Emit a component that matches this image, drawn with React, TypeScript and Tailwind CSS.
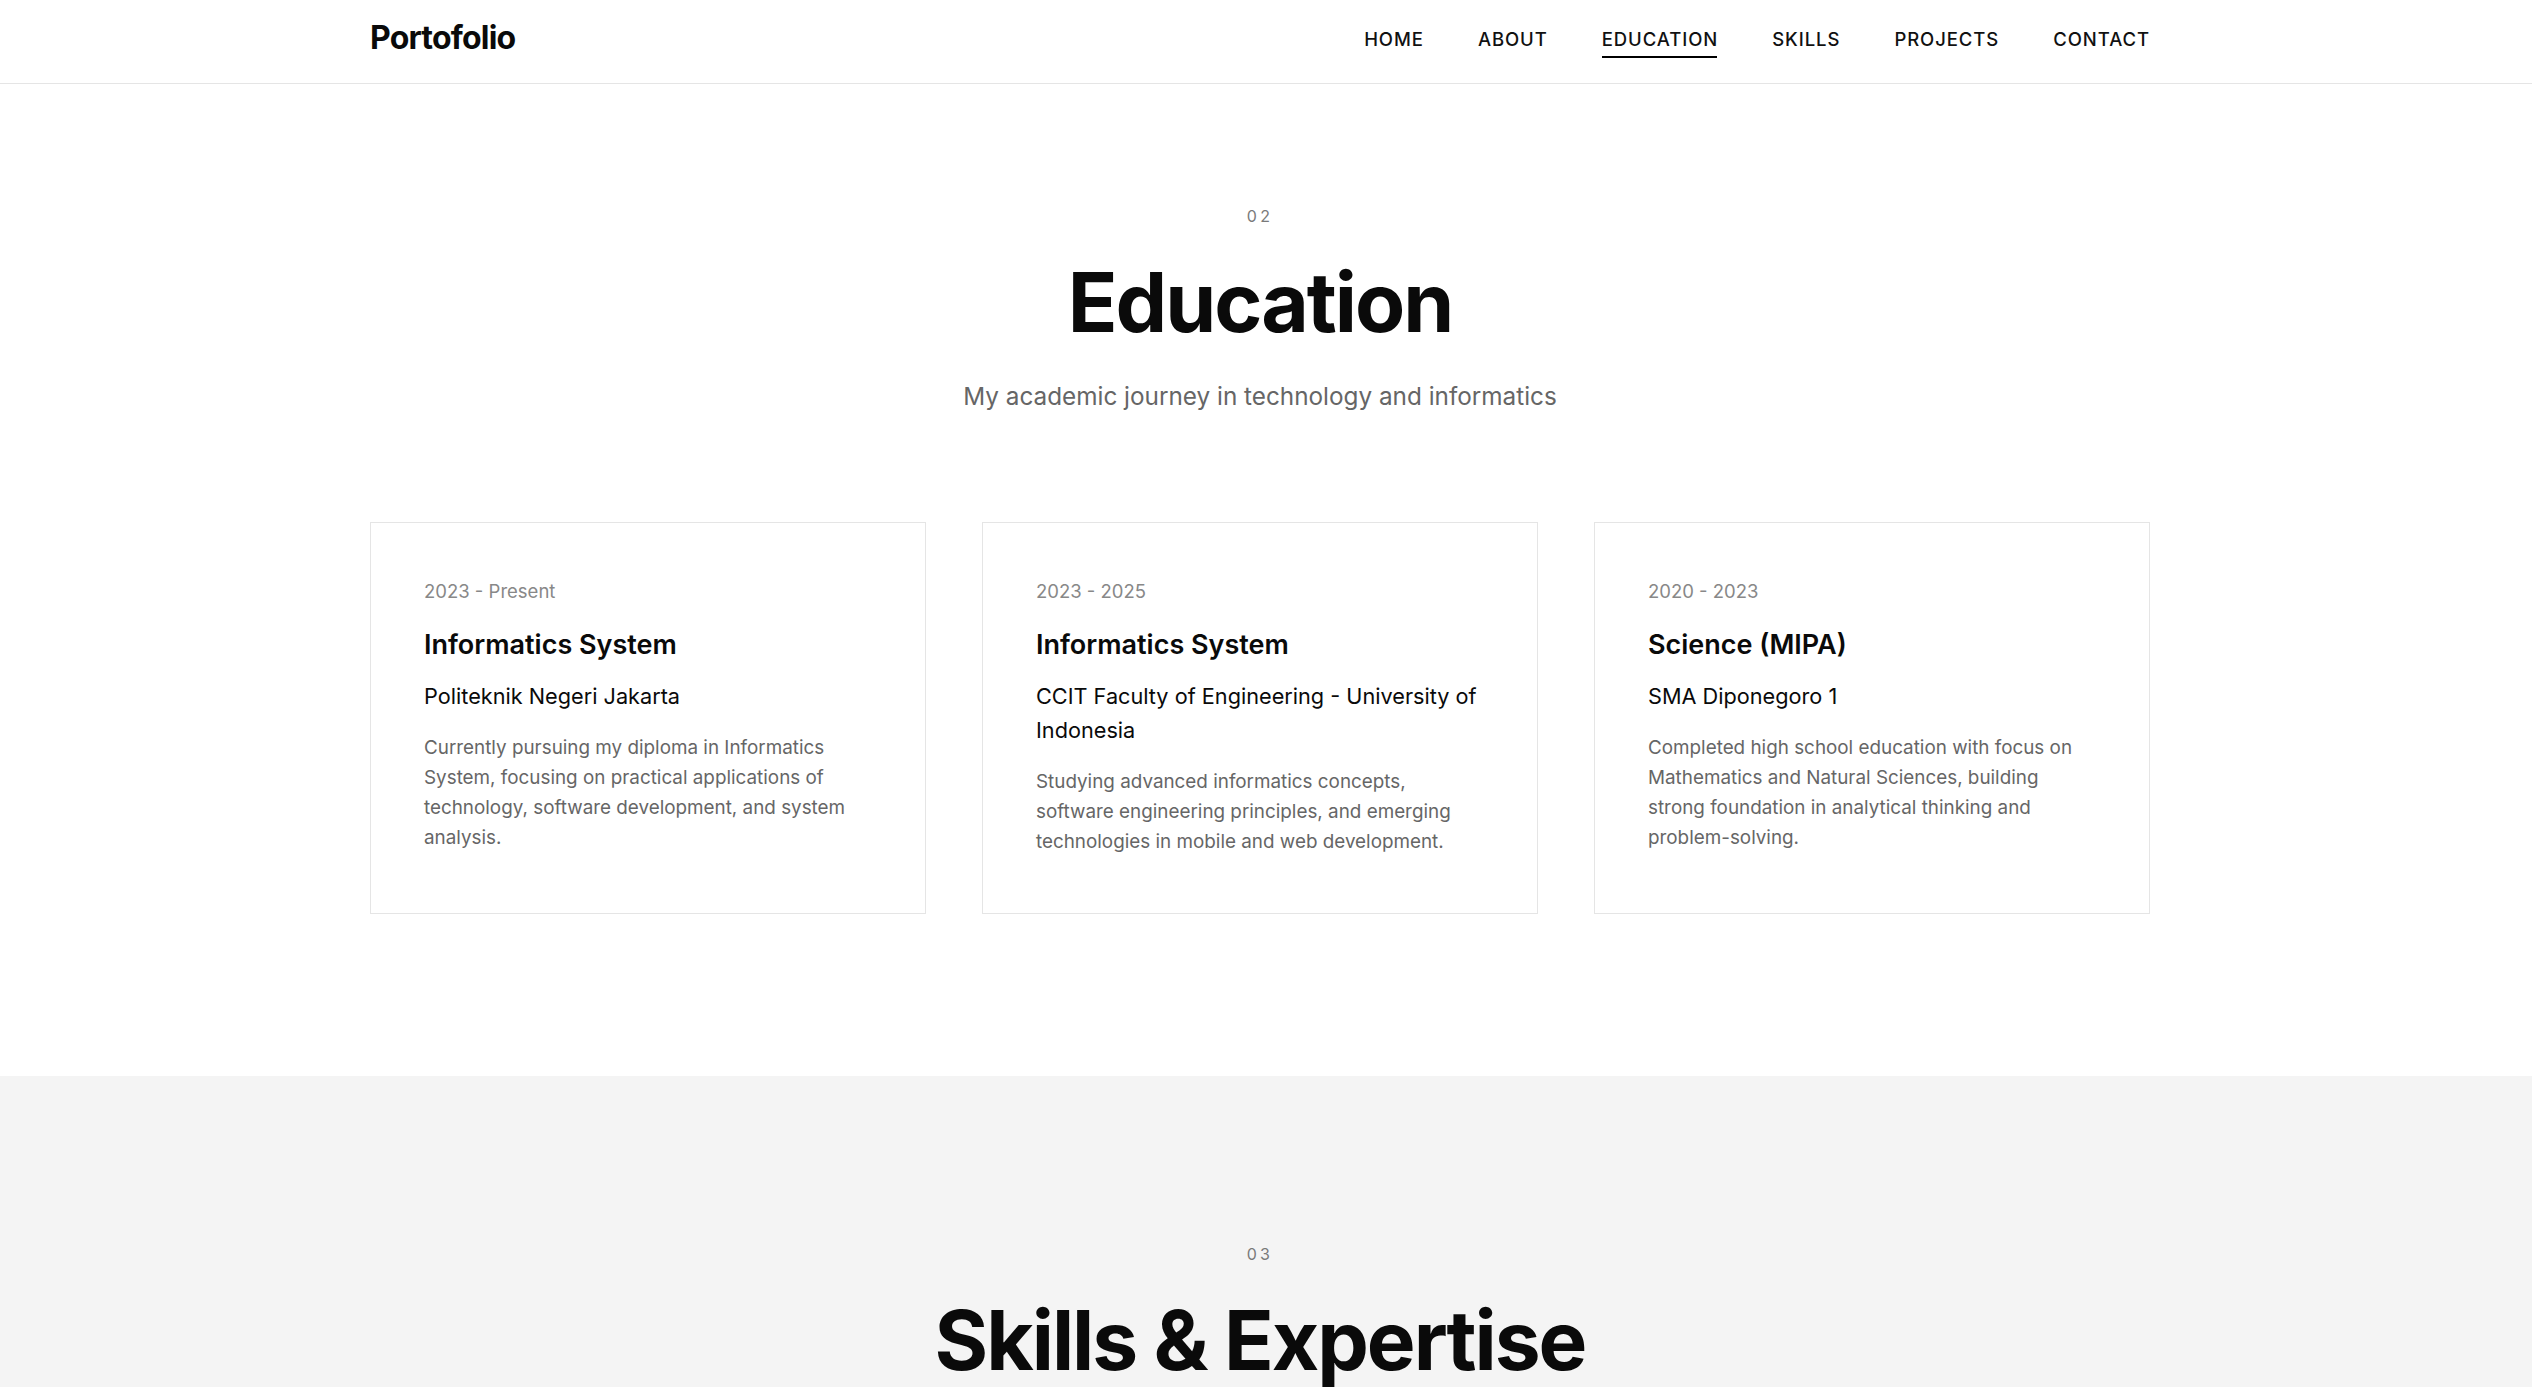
import React from "react";

const cards = [
  {
    date: "2023 - Present",
    title: "Informatics System",
    place: "Politeknik Negeri Jakarta",
    desc: "Currently pursuing my diploma in Informatics System, focusing on practical applications of technology, software development, and system analysis.",
  },
  {
    date: "2023 - 2025",
    title: "Informatics System",
    place: "CCIT Faculty of Engineering - University of Indonesia",
    desc: "Studying advanced informatics concepts, software engineering principles, and emerging technologies in mobile and web development.",
  },
  {
    date: "2020 - 2023",
    title: "Science (MIPA)",
    place: "SMA Diponegoro 1",
    desc: "Completed high school education with focus on Mathematics and Natural Sciences, building strong foundation in analytical thinking and problem-solving.",
  },
];

const nav = ["HOME", "ABOUT", "EDUCATION", "SKILLS", "PROJECTS", "CONTACT"];

export default function App() {
  return (
    <div className="min-h-screen bg-white font-['Inter',sans-serif] text-[#0a0a0a]">
      <header className="border-b border-[#e5e5e5] bg-white">
        <div className="ml-[370px] flex h-[83px] w-[1780px] items-center justify-between">
          <div className="mb-[7px] text-[32px] font-bold leading-[48px] tracking-tight text-[#0a0a0a]">
            Portofolio
          </div>
          <nav className="flex items-center gap-[54px]">
            {nav.map((n) => (
              <a
                key={n}
                className="relative pb-[5px] text-[18.5px] font-medium leading-[27px] tracking-[0.05em] text-[#111]"
              >
                {n}
                {n === "EDUCATION" && (
                  <span className="absolute bottom-0 left-0 right-[1px] h-[2px] bg-black" />
                )}
              </a>
            ))}
          </nav>
        </div>
      </header>

      <section className="pb-[162px] pt-[120px]">
        <div className="ml-[370px] w-[1780px]">
          <div className="mb-[108px] flex flex-col items-center text-center">
            <div className="mb-[30px] text-[16px] leading-6 tracking-[0.2em] text-[#7a7a7a]">02</div>
            <h2 className="mb-[30px] text-[82px] font-bold leading-[1.1] tracking-tight text-[#0a0a0a]">
              Education
            </h2>
            <p className="text-[24.3px] leading-[36px] text-[#666]">
              My academic journey in technology and informatics
            </p>
          </div>
          <div className="grid grid-cols-3 gap-14">
            {cards.map((c, i) => (
              <div key={i} className="border border-[#e5e5e5] bg-white px-[53px] pb-[56px] pt-[54px]">
                <div className="mb-[22px] text-[18.5px] leading-7 text-[#888]">{c.date}</div>
                <h3 className="mb-4 text-[27px] font-semibold leading-[36px] text-[#0a0a0a]">
                  {c.title}
                </h3>
                <div className="mb-5 text-[21.7px] leading-[34px] text-[#0a0a0a]">{c.place}</div>
                <p className="text-[18.85px] leading-[30px] text-[#666]">{c.desc}</p>
              </div>
            ))}
          </div>
        </div>
      </section>

      <section className="bg-[#f4f4f4] pb-[120px] pt-[166px]">
        <div className="ml-[370px] flex w-[1780px] flex-col items-center text-center">
          <div className="mb-[30px] text-[16px] leading-6 tracking-[0.2em] text-[#7a7a7a]">03</div>
          <h2 className="text-[82px] font-bold leading-[1.1] tracking-tight text-[#0a0a0a]">
            Skills &amp; Expertise
          </h2>
        </div>
      </section>
    </div>
  );
}
